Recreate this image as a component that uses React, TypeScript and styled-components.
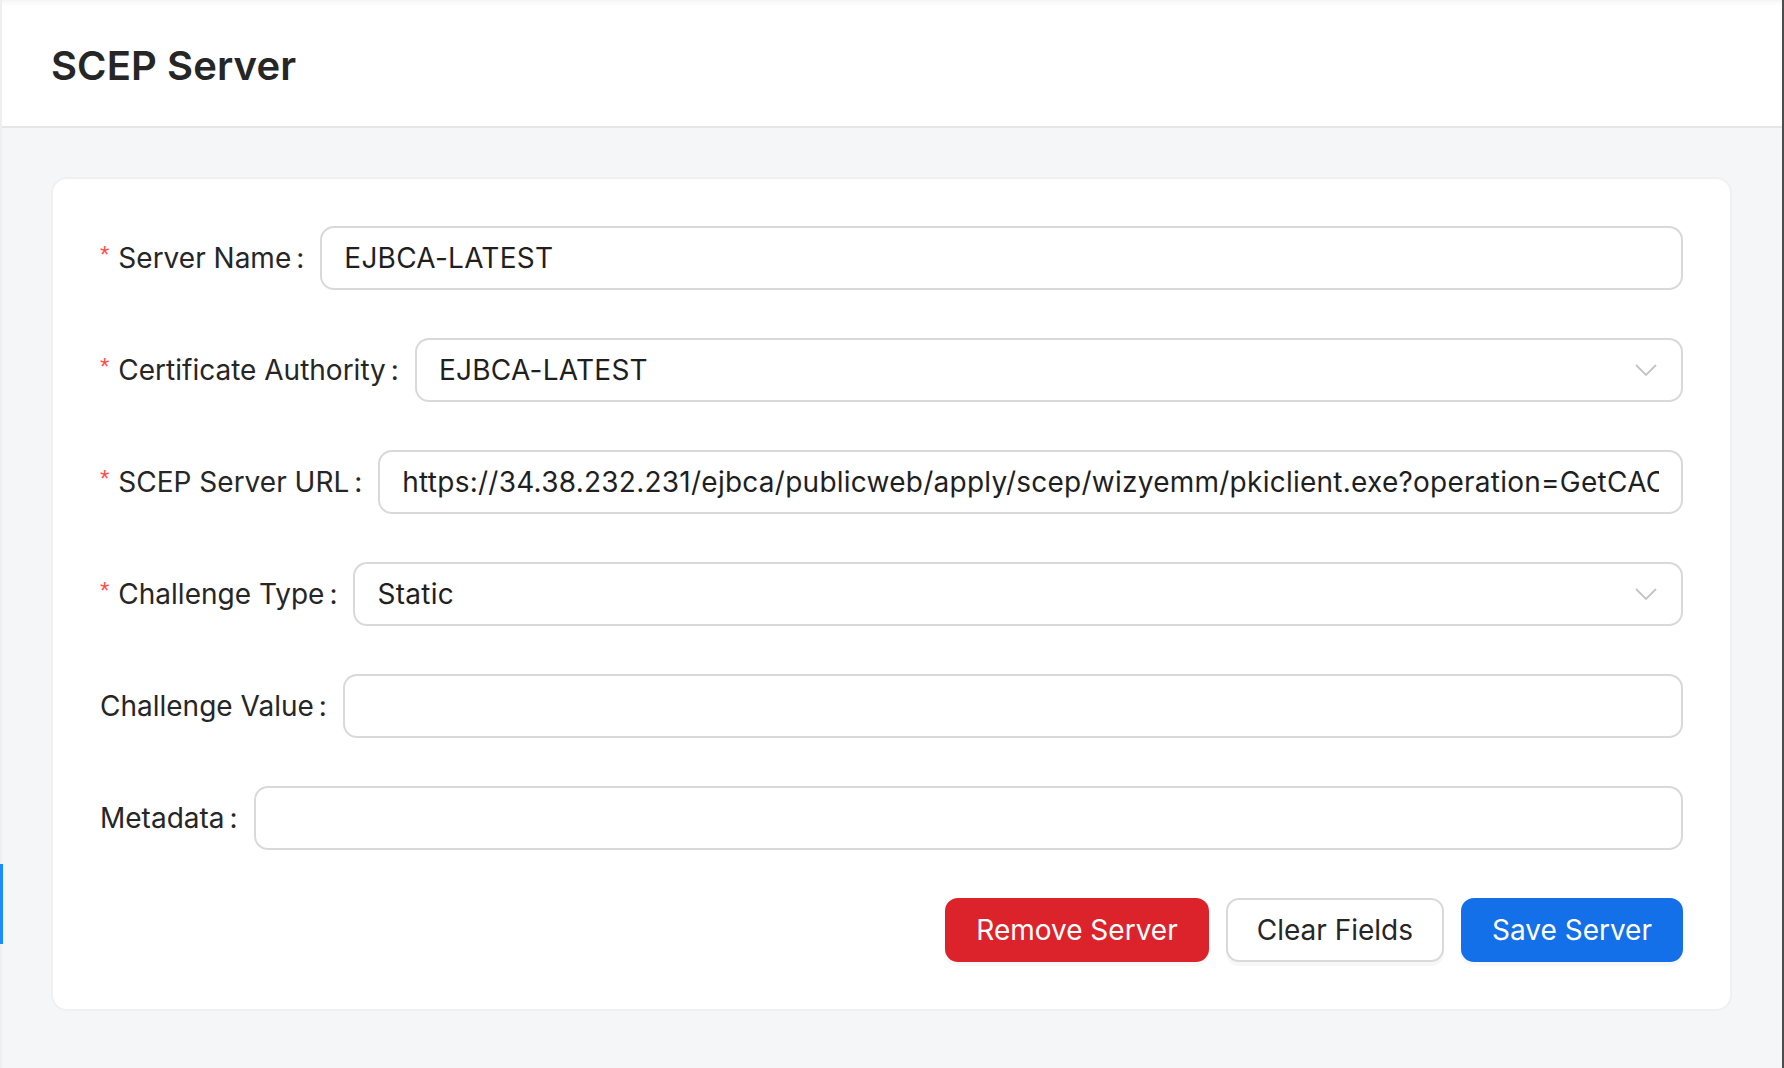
import React from "react";
import styled, { createGlobalStyle } from "styled-components";

const GlobalStyle = createGlobalStyle`
  html, body {
    margin: 0;
    padding: 0;
    background: #f5f6f8;
  }
  body {
    font-family: Inter, "Noto Sans", Roboto, sans-serif;
    color: #1f1f1f;
  }
  * {
    box-sizing: border-box;
  }
`;

const Page = styled.div`
  position: relative;
  min-height: 1068px;
  background: #f5f6f8;
  border-left: 2px solid #efefef;
  border-right: 2px solid #4d4d4d;
`;

const ActiveMarker = styled.span`
  position: absolute;
  left: -2px;
  top: 864px;
  width: 3px;
  height: 80px;
  background: #1a8cff;
`;

const Header = styled.header`
  height: 128px;
  display: flex;
  align-items: center;
  padding: 4px 48px 0 49px;
  background: #fff;
  border-bottom: 2px solid #e6e6e6;
  box-shadow: inset 0 7px 6px -6px rgba(0, 0, 0, 0.07);
`;

const Title = styled.h1`
  margin: 0;
  font-size: 40px;
  font-weight: 600;
  letter-spacing: 0.1px;
  color: #262626;
`;

const Main = styled.main`
  padding: 49px 50px 0 49px;
`;

const Card = styled.section`
  background: #fff;
  border: 2px solid #f0f0f0;
  border-radius: 16px;
  padding: 47px;
`;

const Row = styled.div`
  display: flex;
  align-items: center;
  margin-bottom: 48px;
`;

const Label = styled.label`
  display: flex;
  align-items: center;
  flex: none;
  font-size: 28px;
  color: #262626;
  white-space: nowrap;
`;

const Asterisk = styled.span`
  color: #ff4d4f;
  font-family: "Liberation Sans", sans-serif;
  font-size: 24px;
  line-height: 1;
  margin-right: 9px;
  margin-top: -6px;
`;

const Colon = styled.span`
  margin: 0 16px 0 5px;
`;

const TextInput = styled.input`
  flex: 1;
  min-width: 0;
  height: 64px;
  padding: 0 22px;
  border: 2px solid #d9d9d9;
  border-radius: 14px;
  background: #fff;
  font-family: Inter, "Noto Sans", sans-serif;
  font-size: 28px;
  letter-spacing: 0.25px;
  color: #1f1f1f;
  outline: none;
`;

const SelectBox = styled.div`
  flex: 1;
  min-width: 0;
  height: 64px;
  display: flex;
  align-items: center;
  justify-content: space-between;
  padding: 0 22px;
  border: 2px solid #d9d9d9;
  border-radius: 14px;
  background: #fff;
  font-size: 28px;
  letter-spacing: 0.25px;
  color: #1f1f1f;
`;

const Chevron = styled.svg`
  width: 22px;
  height: 12px;
  flex: none;
  margin-right: 2px;
`;

const Actions = styled.div`
  display: flex;
  justify-content: flex-end;
  gap: 17px;
`;

const Button = styled.button<{ $variant: "danger" | "default" | "primary" }>`
  height: 64px;
  padding: 0 29px;
  border-radius: 13px;
  font-family: Inter, "Noto Sans", sans-serif;
  font-size: 28px;
  cursor: pointer;
  box-shadow: 0 4px 0 rgba(0, 0, 0, 0.03);
  border: 2px solid
    ${(p) =>
      p.$variant === "danger"
        ? "#dc232b"
        : p.$variant === "primary"
        ? "#1470e8"
        : "#d9d9d9"};
  background: ${(p) =>
    p.$variant === "danger"
      ? "#dc232b"
      : p.$variant === "primary"
      ? "#1470e8"
      : "#fff"};
  color: ${(p) => (p.$variant === "default" ? "#262626" : "#fff")};
`;

type FieldProps = {
  label: string;
  required?: boolean;
  children: React.ReactNode;
};

function Field({ label, required, children }: FieldProps) {
  return (
    <Row>
      <Label>
        {required && <Asterisk>*</Asterisk>}
        {label}
        <Colon>:</Colon>
      </Label>
      {children}
    </Row>
  );
}

function Select({ value }: { value: string }) {
  return (
    <SelectBox>
      <span>{value}</span>
      <Chevron viewBox="0 0 22 12" fill="none">
        <path d="M1 1l10 10L21 1" stroke="#c4c4c4" strokeWidth="1.8" />
      </Chevron>
    </SelectBox>
  );
}

export default function App() {
  return (
    <>
      <GlobalStyle />
      <Page>
        <ActiveMarker />
        <Header>
          <Title>SCEP Server</Title>
        </Header>
        <Main>
          <Card>
            <Field label="Server Name" required>
              <TextInput value="EJBCA-LATEST" readOnly />
            </Field>
            <Field label="Certificate Authority" required>
              <Select value="EJBCA-LATEST" />
            </Field>
            <Field label="SCEP Server URL" required>
              <TextInput
                value="https://34.38.232.231/ejbca/publicweb/apply/scep/wizyemm/pkiclient.exe?operation=GetCACaps"
                readOnly
              />
            </Field>
            <Field label="Challenge Type" required>
              <Select value="Static" />
            </Field>
            <Field label="Challenge Value">
              <TextInput value="" readOnly />
            </Field>
            <Field label="Metadata">
              <TextInput value="" readOnly />
            </Field>
            <Actions>
              <Button $variant="danger">Remove Server</Button>
              <Button $variant="default">Clear Fields</Button>
              <Button $variant="primary">Save Server</Button>
            </Actions>
          </Card>
        </Main>
      </Page>
    </>
  );
}
